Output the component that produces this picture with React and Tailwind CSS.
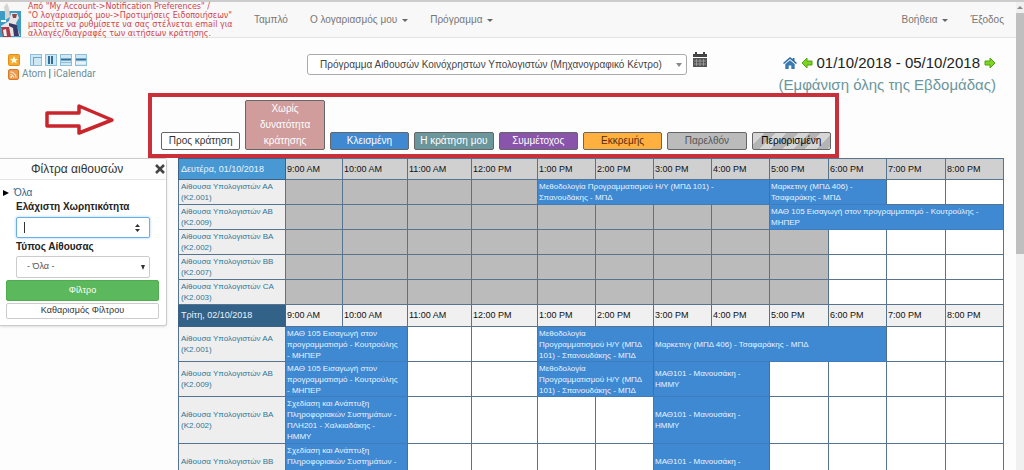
import { useState } from 'react';

const HOURS = [
  '9:00 AM', '10:00 AM', '11:00 AM', '12:00 PM', '1:00 PM', '2:00 PM',
  '3:00 PM', '4:00 PM', '5:00 PM', '6:00 PM', '7:00 PM', '8:00 PM',
];

const LEGEND = [
  { label: 'Προς κράτηση', style: 'bg-white text-[#333]' },
  { label: 'Χωρίς\nδυνατότητα\nκράτησης', style: 'bg-[#d09c9c] text-white' },
  { label: 'Κλεισμένη', style: 'bg-[#3f88d2] text-white' },
  { label: 'Η κράτηση μου', style: 'bg-[#6b969c] text-white' },
  { label: 'Συμμέτοχος', style: 'bg-[#8855aa] text-white' },
  { label: 'Εκκρεμής', style: 'bg-[#ffb03f] text-[#5a2a10]' },
  { label: 'Παρελθόν', style: 'bg-[#bbb] text-[#555]' },
  {
    label: 'Περιορισμένη',
    style: 'bg-[repeating-linear-gradient(135deg,#d6d6d6_0px,#d6d6d6_8px,#b4b4b4_8px,#b4b4b4_16px)] text-black',
  },
];

const INTRO = 'ΜΑΘ 105 Εισαγωγή στον\nπρογραμματισμό - Κουτρούλης\n- ΜΗΠΕΡ';
const INTRO_WIDE = 'ΜΑΘ 105 Εισαγωγή στον προγραμματισμό - Κουτρούλης -\nΜΗΠΕΡ';
const METHODS = 'Μεθοδολογία\nΠρογραμματισμού Η/Υ (ΜΠΔ\n101) - Σπανουδάκης - ΜΠΔ';
const METHODS_WIDE = 'Μεθοδολογία Προγραμματισμού Η/Υ (ΜΠΔ 101) -\nΣπανουδάκης - ΜΠΔ';
const MARKETING = 'Μαρκετινγ (ΜΠΔ 406) -\nΤσαφαράκης - ΜΠΔ';
const MARKETING_WIDE = 'Μαρκετινγ (ΜΠΔ 406) - Τσαφαράκης - ΜΠΔ';
const SYSTEMS = 'Σχεδίαση και Ανάπτυξη\nΠληροφοριακών Συστημάτων -\nΠΛΗ201 - Χαλκιαδάκης -\nΗΜΜΥ';
const MATH = 'ΜΑΘ101 - Μανουσάκη -\nΗΜΜΥ';

// slots: [kind, number of hours, title]
const DAYS = [
  {
    date: 'Δευτέρα, 01/10/2018',
    today: true,
    rooms: [
      { code: 'ΑΑ', num: 'K2.001', height: 'h-[25px]', slots: [['past', 4], ['res', 4, METHODS_WIDE], ['res', 2, MARKETING], ['open', 2]] },
      { code: 'ΑΒ', num: 'K2.009', height: 'h-[25px]', slots: [['past', 8], ['res', 4, INTRO_WIDE]] },
      { code: 'ΒΑ', num: 'K2.002', height: 'h-[25px]', slots: [['past', 9], ['open', 3]] },
      { code: 'ΒΒ', num: 'K2.007', height: 'h-[25px]', slots: [['past', 9], ['open', 3]] },
      { code: 'CA', num: 'K2.003', height: 'h-[25px]', slots: [['past', 9], ['open', 3]] },
    ],
  },
  {
    date: 'Τρίτη, 02/10/2018',
    today: false,
    rooms: [
      { code: 'ΑΑ', num: 'K2.001', height: 'h-[35px]', slots: [['res', 2, INTRO], ['open', 2], ['res', 2, METHODS], ['res', 4, MARKETING_WIDE], ['open', 2]] },
      { code: 'ΑΒ', num: 'K2.009', height: 'h-[35px]', slots: [['res', 2, INTRO], ['open', 2], ['res', 2, METHODS], ['res', 2, MATH], ['open', 4]] },
      { code: 'ΒΑ', num: 'K2.002', height: 'h-[47px]', slots: [['res', 2, SYSTEMS], ['open', 4], ['res', 2, MATH], ['open', 4]] },
      { code: 'ΒΒ', num: 'K2.007', height: 'h-[47px]', slots: [['res', 2, SYSTEMS], ['open', 4], ['res', 2, MATH], ['open', 4]] },
    ],
  },
];

function Caret() {
  return <span className="inline-block border-x-[3px] border-t-[3px] border-x-transparent border-t-[#666] ml-[5px] align-middle" />;
}

function Logo() {
  return (
    <svg width="21" height="36" viewBox="0 0 21 36" className="shrink-0">
      <rect y="9" width="21" height="26" fill="#3d9cc4" />
      <path d="M5 11 4 5 7 1l2 5 1 9-5 3z" fill="#d9d3cf" />
      <path d="M11 11h6l2 5-3 5 4 13H10l-2-9-7 3v-4l8-5z" fill="#e9e3e6" />
      <path d="M1 25h8l2 10H3z" fill="#a83b45" />
      <path d="M9 21l8 2 2 11h-5l-1-8-4-2z" fill="#3a3a68" />
      <path d="M12 12h5l-1 4h-3z" fill="#8a4a46" />
      <path d="M1 18h5v2H1z" fill="#fff" />
      <path d="M3 28l3-1 1 7H4z" fill="#eee" />
    </svg>
  );
}

function StarIcon() {
  return (
    <svg width="12" height="12" viewBox="0 0 12 12">
      <rect x=".5" y=".5" width="11" height="11" rx="1" fill="#f6a92b" stroke="#e08f1c" />
      <path d="M6 2l1.2 2.7 2.8.2-2.1 1.9.7 2.8L6 8.1 3.4 9.6l.7-2.8L2 4.9l2.8-.2z" fill="#fffbe0" />
    </svg>
  );
}

function ViewIcon({ children }) {
  return (
    <svg width="12" height="12" viewBox="0 0 12 12">
      <rect x=".5" y=".5" width="11" height="11" fill="#cfe6f3" stroke="#8dbfdb" />
      {children}
    </svg>
  );
}

function RssIcon() {
  return (
    <svg width="11" height="11" viewBox="0 0 11 11">
      <rect x=".5" y=".5" width="10" height="10" rx="1.5" fill="#ee9a4d" stroke="#d97a2b" />
      <path d="M2.5 5.5a3 3 0 0 1 3 3M2.5 3a5.500 5.500 0 0 1 5.500 5.500" fill="none" stroke="#fff" />
      <circle cx="3.200" cy="7.800" r=".9" fill="#fff" />
    </svg>
  );
}

function CalendarIcon() {
  return (
    <svg width="14" height="16" viewBox="0 0 14 16">
      <path d="M0 2h14v3H0z" fill="#444" />
      <path d="M2 0h2v2H2zM10 0h2v2h-2z" fill="#444" />
      <path d="M0 6h14v9H0z" fill="#555" />
      <path d="M3.500 7v7M7 7v7M10.500 7v7M1 9h12M1 12h12" stroke="#aaa" strokeWidth=".7" />
    </svg>
  );
}

function HomeIcon() {
  return (
    <svg width="14" height="12" viewBox="0 0 14 12">
      <path d="M7 0 0 6l1 1 6-5 6 5 1-1-2.500-2.200V1H9.700v1.300z" fill="#2d6ca2" />
      <path d="M2.300 7 7 3.200 11.700 7v5H8.300V8.500H5.700V12H2.300z" fill="#3a7ab0" />
    </svg>
  );
}

function ArrowIcon({ right }) {
  return (
    <svg width="12" height="12" viewBox="0 0 12 12" className={right ? 'rotate-180' : ''}>
      <path d="M1 6l5-5v3h5v4H6v3z" fill="#7ed321" stroke="#4da30f" strokeLinejoin="round" />
    </svg>
  );
}

function Navbar() {
  return (
    <nav className="flex items-center h-9 bg-[#f8f8f8] border-b border-[#e4e4e4] text-[10px] text-[#777]">
      <Logo />
      <p className="w-[226px] pl-[7px] shrink-0 font-['DejaVu_Sans',sans-serif] text-[8px] leading-[9px] text-[#d0464c] whitespace-nowrap">
        Από "My Account-&gt;Notification Preferences" /<br />
        "Ο λογαριασμός μου-&gt;Προτιμήσεις Ειδοποιήσεων"<br />
        μπορείτε να ρυθμίσετε να σας στέλνεται email για<br />
        αλλαγές/διαγραφές των αιτήσεων κράτησης.
      </p>
      <div className="flex flex-1 justify-between pl-[7px] pr-3">
        <div className="flex gap-[22px]">
          <a href="#">Ταμπλό</a>
          <a href="#">Ο λογαριασμός μου<Caret /></a>
          <a href="#">Πρόγραμμα<Caret /></a>
        </div>
        <div className="flex gap-[22px]">
          <a href="#">Βοήθεια<Caret /></a>
          <a href="#">Έξοδος</a>
        </div>
      </div>
    </nav>
  );
}

function Toolbar() {
  return (
    <div className="flex h-[55px] pl-2 pr-4">
      <div className="w-[299px] shrink-0 pt-4">
        <div className="flex gap-[3px]">
          <button aria-label="Προεπιλογή" className="mr-[7px]"><StarIcon /></button>
          <button aria-label="Κανονική προβολή"><ViewIcon><path d="M3 3.500h8M3.500 3v8" stroke="#6aa7ca" /></ViewIcon></button>
          <button aria-label="Κάθετη προβολή"><ViewIcon><path d="M4 2v8M7 2v8" stroke="#2f6f9c" strokeWidth="2" /></ViewIcon></button>
          <button aria-label="Προβολή εβδομάδας"><ViewIcon><path d="M1 5.500h10" stroke="#2f6f9c" strokeWidth="2" /><path d="M1 8.500h10" stroke="#8dbfdb" /></ViewIcon></button>
          <button aria-label="Συμπτυγμένη προβολή"><ViewIcon><path d="M1 5.500h10" stroke="#2f6f9c" strokeWidth="2" /><path d="M1 9h10" stroke="#fff" /></ViewIcon></button>
        </div>
        <div className="flex items-center gap-[3px] mt-px font-[Roboto,sans-serif] text-[10px] leading-[14px] text-[#6c8f99]">
          <RssIcon />
          <span><a href="#">Atom</a> <span className="text-[#333]">|</span> <a href="#">iCalendar</a></span>
        </div>
      </div>
      <div className="flex items-start flex-1 gap-1.5 pt-[14px]">
        <div className="relative w-[380px] mt-0.5">
          <select aria-label="Πρόγραμμα" className="block appearance-none w-full h-[21px] px-3 bg-white border border-[#aaa] rounded-[3px] text-[10px] text-[#444]">
            <option>Πρόγραμμα Αιθουσών Κοινόχρηστων Υπολογιστών (Μηχανογραφικό Κέντρο)</option>
          </select>
          <span className="absolute right-[5px] top-[9px] border-x-[3px] border-t-4 border-x-transparent border-t-[#888]" />
        </div>
        <button aria-label="Ημερολόγιο"><CalendarIcon /></button>
      </div>
      <div className="pt-[14px] pr-1 text-right text-[15px] leading-[22px]">
        <div className="flex items-center justify-end gap-1 text-[#222]">
          <a href="#" aria-label="Σήμερα"><HomeIcon /></a>
          <a href="#" aria-label="Προηγούμενη"><ArrowIcon /></a>
          <span>01/10/2018 - 05/10/2018</span>
          <a href="#" aria-label="Επόμενη"><ArrowIcon right /></a>
        </div>
        <a href="#" className="block text-[#6b969c]">(Εμφάνιση όλης της Εβδομάδας)</a>
      </div>
    </div>
  );
}

function Legend() {
  return (
    <div className="flex items-start pl-[45px] pr-[177px]">
      <svg width="70" height="32" viewBox="0 0 70 32" className="mt-[11px] mr-[33px] shrink-0">
        <path d="M2 9h32V2l33 14-33 13v-7H2z" fill="none" stroke="#c9252c" strokeWidth="3.500" strokeLinejoin="round" />
      </svg>
      <div className="flex flex-1 items-end gap-[5px] h-[65px] pl-[9px] pr-1 pb-1 border-4 border-[#c9303a] text-[10px] leading-4">
        {LEGEND.map((item) => (
          <div key={item.label} className={`flex-1 min-w-0 border border-[#666] rounded-[2px] text-center whitespace-pre-line ${item.style}`}>
            {item.label}
          </div>
        ))}
      </div>
    </div>
  );
}

function FilterPanel({ onClose }) {
  const [capacity, setCapacity] = useState('');
  return (
    <aside className="w-[167px] shrink-0 self-start pb-1.5 bg-white border border-l-0 border-[#ccc] rounded-r-[3px] shadow-sm">
      <div className="flex items-center justify-between h-[21px] pl-[31px] border-b border-[#e5e5e5] bg-[#fdfdfd] text-[#333]">
        <h2 className="text-[12px]">Φίλτρα αιθουσών</h2>
        <button onClick={onClose} aria-label="Κλείσιμο">
          <svg width="10" height="10" viewBox="0 0 10 10" className="mr-px"><path d="M1 1l8 8M9 1l-8 8" stroke="#444" strokeWidth="2.500" /></svg>
        </button>
      </div>
      <form className="pt-1.5 text-[10px]" onSubmit={(e) => e.preventDefault()}>
        <a href="#" className="flex items-center gap-[5px] pl-[3px] leading-[14px] text-[#336288]">
          <span className="border-y-[3px] border-l-[6px] border-y-transparent border-l-black" />Όλα
        </a>
        <div className="px-4 text-[#222]">
          <label htmlFor="capacity" className="block leading-[13px] font-bold">Ελάχιστη Χωρητικότητα</label>
          <div className="relative mt-1">
            <input
              id="capacity"
              type="number"
              value={capacity}
              onChange={(e) => setCapacity(e.target.value)}
              className="block w-full h-[21px] px-2 bg-white border border-[#66afe9] rounded-[2px] outline-none shadow-[0_0_3px_#66afe999]"
            />
            {capacity === '' && <span className="absolute left-2 top-[5px] w-px h-[11px] bg-[#333]" />}
            <svg width="5" height="8" viewBox="0 0 5 8" className="absolute right-[10px] top-[7px]"><path d="M2.500 0 5 3H0zM2.500 8 5 5H0z" fill="#333" /></svg>
          </div>
          <label htmlFor="type" className="block mt-0.5 leading-[14px] font-bold">Τύπος Αίθουσας</label>
          <div className="relative mt-0.5">
            <select id="type" className="appearance-none block w-full h-[22px] px-2.5 bg-white border border-[#ccc] rounded-[2px] text-[9px] text-[#555]">
              <option>- Όλα -</option>
            </select>
            <span className="absolute right-[5px] top-[9px] border-x-2 border-t-[5px] border-x-transparent border-t-[#333]" />
          </div>
        </div>
        <div className="flex flex-col gap-0.5 mt-0.5 pl-1.5 pr-[7px] text-[9px]">
          <button className="h-[21px] bg-[#5cb85c] border border-[#4cae4c] rounded-[2px] text-white">Φίλτρο</button>
          <button type="reset" onClick={() => setCapacity('')} className="h-4 bg-white border border-[#ccc] rounded-[2px] text-[#333]">Καθαρισμός Φίλτρου</button>
        </div>
      </form>
    </aside>
  );
}

function Slots({ slots }) {
  return slots.map(([kind, span, title], i) => {
    if (kind === 'res') {
      return (
        <td key={i} colSpan={span} className="px-px bg-[#3f88d2] border border-[#4b6f92] border-y-[#3f7cba] whitespace-pre-line text-[#e8f4ff]">
          {title}
        </td>
      );
    }
    return Array.from({ length: span }, (_, n) => (
      <td key={`${i}-${n}`} className={`border border-[#56748f] ${kind === 'past' ? 'bg-[#bbb]' : 'bg-white'}`} />
    ));
  });
}

function Schedule() {
  return (
    <table className="w-full table-fixed border-collapse text-[8px] leading-[11px]">
      <colgroup>
        <col className="w-[107px]" />
        <col className="w-[57px]" />
        <col className="w-[65px]" />
        <col className="w-[64px]" />
        <col className="w-[66px]" />
        <col className="w-[58px]" span="4" />
        <col className="w-[59px]" />
        <col className="w-[58px]" />
        <col className="w-[59px]" />
        <col className="w-[58px]" />
      </colgroup>
      {DAYS.map((day) => (
        <tbody key={day.date}>
          <tr className={`text-[9px] ${day.today ? 'h-[21px] bg-[#d0d0d0]' : 'h-[22px] bg-[#f0f0f0]'}`}>
            <th scope="row" className={`px-0.5 border border-[#3c6184] text-left font-normal text-[#e8f4ff] ${day.today ? 'bg-[#4899d3]' : 'bg-[#336288]'}`}>
              {day.date}
            </th>
            {HOURS.map((hour) => (
              <th key={hour} scope="col" className="px-px border border-[#56748f] text-left font-normal text-[#111]">{hour}</th>
            ))}
          </tr>
          {day.rooms.map((room) => (
            <tr key={room.num} className={room.height}>
              <th scope="row" className="px-0.5 bg-[#eee] border border-[#56748f] text-left font-normal text-[#2e7797]">
                <a href="#">Αίθουσα Υπολογιστών {room.code}<br />({room.num})</a>
              </th>
              <Slots slots={room.slots} />
            </tr>
          ))}
        </tbody>
      ))}
    </table>
  );
}

export default function App() {
  const [showFilter, setShowFilter] = useState(true);

  return (
    <div className="flex h-screen overflow-hidden bg-[#fdfdfd] border-t-2 border-[#ccc] font-['Liberation_Sans',Arial,sans-serif]">
      <main className="flex-1 min-w-0">
        <Navbar />
        <Toolbar />
        <Legend />
        <div className="flex pr-3">
          {showFilter && <FilterPanel onClose={() => setShowFilter(false)} />}
          <div className="flex-1 min-w-0 ml-[11px]">
            <Schedule />
          </div>
        </div>
      </main>
      <div className="w-2 shrink-0 pt-1 bg-[#f0f0f0]">
        <div className="mx-auto w-0 border-x-[3px] border-b-[3px] border-x-transparent border-b-[#888]" />
        <div className="h-[52%] mt-1 bg-[#bfbfbf]" />
      </div>
    </div>
  );
}
